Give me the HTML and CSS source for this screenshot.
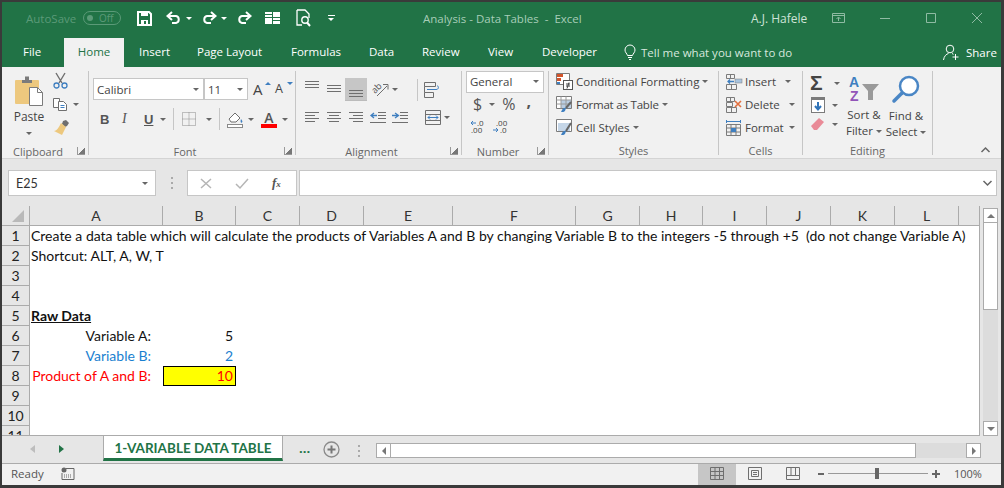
FILE: index.html
```html
<!DOCTYPE html>
<html lang="en">
<head>
    <title>Analysis - Data Tables - Excel</title>
    <meta charset="utf-8">
    <link rel="stylesheet" href="styles.css">
</head>
<body>
<div class="window">

    <!-- title bar -->
    <div class="titlebar">
        <span class="autosave">AutoSave</span>
        <span class="toggle"><i class="knob"></i>Off</span>
        <svg class="qa qa-save" width="15" height="15" viewBox="0 0 15 15"><path d="M1 1h11l2 2v11H1z" fill="none" stroke="#fff" stroke-width="2"/><rect x="4" y="1" width="7" height="4" fill="#fff"/><rect x="4" y="9" width="7" height="5" fill="#fff"/><rect x="7" y="10" width="2" height="3" fill="#217346"/></svg>
        <svg class="qa qa-undo" width="15" height="14" viewBox="0 0 15 14"><path d="M2 5h8a3.6 3.6 0 0 1 0 7H6" fill="none" stroke="#fff" stroke-width="2"/><path d="M6 1 1.500 5 6 9" fill="none" stroke="#fff" stroke-width="2"/></svg>
        <i class="caret caret-white qa-c1"></i>
        <svg class="qa qa-redo" width="15" height="14" viewBox="0 0 15 14"><path d="M13 5H5a3.600 3.600 0 0 0 0 7h4" fill="none" stroke="#fff" stroke-width="2"/><path d="M9 1l4.500 4L9 9" fill="none" stroke="#fff" stroke-width="2"/></svg>
        <i class="caret caret-white qa-c2"></i>
        <svg class="qa qa-repeat" width="15" height="14" viewBox="0 0 15 14"><path d="M13 5H5a3.600 3.600 0 0 0 0 7h4" fill="none" stroke="#fff" stroke-width="2"/><path d="M9 1l4.500 4L9 9" fill="none" stroke="#fff" stroke-width="2"/></svg>
        <svg class="qa qa-layout" width="15" height="12" viewBox="0 0 15 12"><path d="M0 0h7v5H0zM8 0h7v5H8zM0 6h7v6H0zM8 6h7v6H8z" fill="#fff"/><path d="M0 2.500h7M8 8.500h7" stroke="#217346"/></svg>
        <svg class="qa qa-preview" width="15" height="18" viewBox="0 0 15 18"><path d="M1 1h8l4 4v4M1 1v15h5" fill="none" stroke="#fff" stroke-width="1.300"/><circle cx="9" cy="11" r="3.200" fill="none" stroke="#fff" stroke-width="1.400"/><path d="M11 13.500l3 3.500" stroke="#fff" stroke-width="2"/></svg>
        <span class="qa-more"><i class="bar"></i><i class="caret caret-white"></i></span>
        <span class="doc-title">Analysis - Data Tables&nbsp; -&nbsp; Excel</span>
        <span class="user">A.J. Hafele</span>
        <svg class="win win-display" width="13" height="10" viewBox="0 0 13 10"><path d="M.5.500h12v9H.5zM.5 2.500h12M6.500 8V4.500M4.500 6l2-2 2 2" fill="none" stroke="#8fbba3"/></svg>
        <svg class="win win-min" width="10" height="10" viewBox="0 0 10 10"><path d="M0 5.500h10" stroke="#8fbba3"/></svg>
        <svg class="win win-max" width="10" height="10" viewBox="0 0 10 10"><path d="M.5.500h9v9h-9z" fill="none" stroke="#8fbba3"/></svg>
        <svg class="win win-close" width="10" height="10" viewBox="0 0 10 10"><path d="M0 0l10 10M10 0L0 10" stroke="#8fbba3"/></svg>
    </div>

    <!-- ribbon tabs -->
    <div class="tabs">
        <span class="tab tab-file">File</span>
        <span class="tab tab-home">Home</span>
        <span class="tab tab-insert">Insert</span>
        <span class="tab tab-page">Page Layout</span>
        <span class="tab tab-formulas">Formulas</span>
        <span class="tab tab-data">Data</span>
        <span class="tab tab-review">Review</span>
        <span class="tab tab-view">View</span>
        <span class="tab tab-dev">Developer</span>
        <svg class="bulb" width="12" height="15" viewBox="0 0 12 15"><path d="M3.500 10.500C3 8.500 1 7.500 1 5a5 5 0 0 1 10 0c0 2.500-2 3.500-2.500 5.500zM4 12.500h4M5 14.500h2" fill="none" stroke="#fff"/></svg>
        <span class="tellme">Tell me what you want to do</span>
        <svg class="share-icon" width="16" height="17" viewBox="0 0 16 17"><circle cx="7" cy="5" r="3.800" fill="none" stroke="#fff"/><path d="M.5 16c.5-4 3-6 5-6.500M9 9.500c.6.200 1 .5 1.500.8M12.500 10v6M9.500 13h6" fill="none" stroke="#fff"/></svg>
        <span class="share">Share</span>
    </div>

    <!-- ribbon -->
    <div class="ribbon">

        <div class="group g-clipboard">
            <div class="group-body clip-body">
                <div class="paste">
                    <svg width="30" height="31" viewBox="0 0 30 31"><rect x="1" y="5" width="24" height="24" rx="1" fill="#edc87e"/><path d="M8 5h3V1.500h4V5h3v3H8z" fill="#7b7b7b"/><path d="M15.500 12.500h8l5 5v13h-13z" fill="#fff" stroke="#7b7b7b"/><path d="M23.500 12.500v5h5" fill="none" stroke="#7b7b7b"/></svg>
                    <span class="paste-label">Paste</span>
                    <i class="caret paste-caret"></i>
                </div>
                <div class="clip-tools">
                    <svg width="15" height="16" viewBox="0 0 15 16"><path d="M3 0l6 10M12 0L6 10" stroke="#6f6f6f" stroke-width="1.400"/><circle cx="3.500" cy="12.500" r="2.500" fill="none" stroke="#3f7fc0" stroke-width="1.300"/><circle cx="11.500" cy="12.500" r="2.500" fill="none" stroke="#3f7fc0" stroke-width="1.300"/></svg>
                    <span class="tool-line">
                        <svg width="15" height="13" viewBox="0 0 15 13"><path d="M.5.500h6v9h-6z" fill="#fff" stroke="#6f6f6f"/><path d="M5.500 3.500h5l3 3v6h-8z" fill="#fff" stroke="#6f6f6f"/><path d="M7.500 7.500h4M7.500 9.500h4" stroke="#3f7fc0"/></svg>
                        <i class="caret copy-caret"></i>
                    </span>
                    <svg width="17" height="15" viewBox="0 0 17 15"><path d="M10 1l3-1 3 3-2 3-2 1-3-3z" fill="#6f6f6f"/><path d="M8 3l5 4-4 8-8-4c3 0 5-4 7-8z" fill="#edc87e"/></svg>
                </div>
            </div>
            <div class="group-label"><span></span><span>Clipboard</span><i class="launcher"></i></div>
        </div>

        <div class="group g-font">
            <div class="group-body">
                <div class="font-row1">
                    <span class="select font-name">Calibri<i class="caret"></i></span>
                    <span class="select font-size">11<i class="caret"></i></span>
                    <span class="grow-a grow-big">A<i class="tip tip-up"></i></span>
                    <span class="grow-a grow-small">A<i class="tip tip-down"></i></span>
                </div>
                <div class="font-row2">
                    <span class="fmt fmt-b">B</span>
                    <span class="fmt fmt-i">I</span>
                    <span class="fmt fmt-u">U</span>
                    <i class="caret c-u"></i>
                    <i class="vsep s-1"></i>
                    <svg class="ic-border" width="14" height="14" viewBox="0 0 14 14"><path d="M.5.500h13v13H.5zM7 .5v13M.5 7h13" fill="none" stroke="#8a8a8a" stroke-dasharray="1 1"/></svg>
                    <i class="caret c-b"></i>
                    <i class="vsep s-2"></i>
                    <svg class="ic-fill" width="17" height="17" viewBox="0 0 17 17"><path d="M2 8l6-6 5 5-4 4H4z" fill="#fff" stroke="#6f6f6f"/><path d="M14 8c1 1.500 2 2.500 1 3.500s-2-.5-1-3.500z" fill="#3f7fc0"/><rect x=".5" y="13.500" width="15" height="3" fill="#fff" stroke="#8a8a8a"/></svg>
                    <i class="caret c-f"></i>
                    <span class="font-color">A</span>
                    <i class="caret c-c"></i>
                </div>
            </div>
            <div class="group-label"><span></span><span>Font</span><i class="launcher"></i></div>
        </div>

        <div class="group g-align">
            <div class="group-body">
                <div class="align-row1">
                    <span class="al al-top"><svg width="14" height="10" viewBox="0 0 14 10"><path d="M0 .5h14M0 3.500h14M0 6.500h14" stroke="#6f6f6f"/></svg></span>
                    <span class="al al-mid"><svg width="14" height="10" viewBox="0 0 14 10"><path d="M0 2.500h14M0 5.500h14M0 8.500h14" stroke="#6f6f6f"/></svg></span>
                    <span class="al al-on"><svg width="14" height="10" viewBox="0 0 14 10"><path d="M0 3.500h14M0 6.500h14M0 9.500h14" stroke="#6f6f6f"/></svg></span>
                    <svg class="ic-orient" width="17" height="15" viewBox="0 0 17 15"><text x="0" y="9" class="ab" transform="rotate(-45 5 7)">ab</text><path d="M5 14l10-10M11 2.500h5v5" fill="none" stroke="#6f6f6f"/></svg>
                    <i class="caret c-o"></i>
                    <i class="vsep s-3"></i>
                    <svg class="ic-wrap" width="16" height="16" viewBox="0 0 16 16"><path d="M.5.500h11v4H.5zM.5 10.500h9v5h-9zM.5 4.500v6" fill="none" stroke="#6f6f6f"/><path d="M3 7.500h9c3 0 3-3 1-4M3 7.500h4" fill="none" stroke="#3f7fc0"/></svg>
                </div>
                <div class="align-row2">
                    <span class="al"><svg width="14" height="11" viewBox="0 0 14 11"><path d="M0 .5h14M0 3.500h10M0 6.500h14M0 9.500h10" stroke="#6f6f6f"/></svg></span>
                    <span class="al"><svg width="14" height="11" viewBox="0 0 14 11"><path d="M0 .5h14M2 3.500h10M0 6.500h14M2 9.500h10" stroke="#6f6f6f"/></svg></span>
                    <span class="al"><svg width="14" height="11" viewBox="0 0 14 11"><path d="M0 .5h14M4 3.500h10M0 6.500h14M4 9.500h10" stroke="#6f6f6f"/></svg></span>
                    <svg class="ic-indent" width="16" height="11" viewBox="0 0 16 11"><path d="M0 10.500h16M8 .5h8M8 3.500h8M8 6.500h8" stroke="#6f6f6f"/><path d="M1 3.500h6M4 1L1 3.500 4 6" fill="none" stroke="#3f7fc0" stroke-width="1.300"/></svg>
                    <svg class="ic-outdent" width="16" height="11" viewBox="0 0 16 11"><path d="M0 10.500h16M8 .5h8M8 3.500h8M8 6.500h8" stroke="#6f6f6f"/><path d="M0 3.500h6M3 1l3.500 2.500L3 6" fill="none" stroke="#3f7fc0" stroke-width="1.300"/></svg>
                    <svg class="ic-merge" width="16" height="15" viewBox="0 0 16 15"><path d="M.5.500h15v14H.5zM.5 4.500h15M.5 10.500h15" fill="none" stroke="#6f6f6f"/><path d="M3 7.500h10M5 5.500l-2 2 2 2M11 5.500l2 2-2 2" fill="none" stroke="#3f7fc0"/></svg>
                    <i class="caret c-m"></i>
                </div>
            </div>
            <div class="group-label"><span></span><span>Alignment</span><i class="launcher"></i></div>
        </div>

        <div class="group g-number">
            <div class="group-body">
                <span class="select num-format">General<i class="caret"></i></span>
                <div class="num-row2">
                    <span class="sym sym-dollar">$</span>
                    <i class="caret c-d"></i>
                    <span class="sym sym-pct">%</span>
                    <span class="sym sym-comma">,</span>
                </div>
                <div class="num-row3">
                    <svg width="16" height="14" viewBox="0 0 16 14"><path d="M1 3h5M3 1L1 3l2 2" fill="none" stroke="#3f7fc0"/><text x="7" y="6" class="dec">.0</text><text x="1" y="13" class="dec">.00</text></svg>
                    <svg width="16" height="14" viewBox="0 0 16 14"><text x="3" y="6" class="dec">.00</text><path d="M0 10h5M3 8l2 2-2 2" fill="none" stroke="#3f7fc0"/><text x="7" y="13" class="dec">.0</text></svg>
                </div>
            </div>
            <div class="group-label"><span></span><span>Number</span><i class="launcher"></i></div>
        </div>

        <div class="group g-styles">
            <div class="group-body stack">
                <div class="line">
                    <svg width="17" height="17" viewBox="0 0 17 17"><path d="M.5.500h13v11H.5z" fill="#fff" stroke="#7b7b7b"/><rect x="1" y="1" width="6" height="3" fill="#d2552c"/><rect x="1" y="5" width="4" height="3" fill="#d2552c"/><rect x="1" y="9" width="3" height="2" fill="#3f7fc0"/><rect x="7.500" y="7.500" width="9" height="9" fill="#fff" stroke="#555"/><path d="M10 11h4M10 13h4M13 9.500l-2 6" stroke="#444"/></svg>
                    <span>Conditional Formatting</span><i class="caret"></i>
                </div>
                <div class="line">
                    <svg width="17" height="17" viewBox="0 0 17 17"><path d="M.5.500h15v12H.5z" fill="#fff" stroke="#7b7b7b"/><rect x="5" y="4" width="10" height="8" fill="#b9cde2"/><path d="M.5 4h15M5 .5v12M10 .5v12M.5 8h15" stroke="#9a9a9a"/><path d="M15 6l-5 6" stroke="#666" stroke-width="2"/><path d="M6 14c1-2 3-2.500 4-2l-1 3c-1 1-2 1-4 1z" fill="#3f7fc0"/></svg>
                    <span class="tight">Format as Table</span><i class="caret"></i>
                </div>
                <div class="line">
                    <svg width="17" height="17" viewBox="0 0 17 17"><path d="M.5.500h15v12H.5z" fill="#fff" stroke="#7b7b7b"/><rect x="2" y="4" width="12" height="8" fill="#c5d6e8"/><path d="M15 4l-5 8" stroke="#666" stroke-width="2"/><path d="M6 14c1-2 3-2.500 4-2l-1 3c-1 1-2 1-4 1z" fill="#3f7fc0"/></svg>
                    <span>Cell Styles</span><i class="caret"></i>
                </div>
            </div>
            <div class="group-label-plain">Styles</div>
        </div>

        <div class="group g-cells">
            <div class="group-body stack">
                <div class="line">
                    <svg width="16" height="16" viewBox="0 0 16 16"><path d="M.5.500h8v4h-8zM.5 10.500h10v5H.5zM5.500 10.500v5M4.500.5v4" fill="none" stroke="#7b7b7b"/><rect x="9" y="5" width="7" height="4" fill="#a9c4de" stroke="#7b7b7b" stroke-width=".5"/><path d="M2 7.500h6M4 5.500l-2 2 2 2" fill="none" stroke="#3f7fc0" stroke-width="1.300"/></svg>
                    <span class="cell-text t-insert">Insert</span><i class="caret"></i>
                </div>
                <div class="line">
                    <svg width="16" height="16" viewBox="0 0 16 16"><path d="M.5.500h8v4h-8zM.5 10.500h10v5H.5zM5.500 10.500v5M4.500.5v4M.5 5.500h6v4h-6z" fill="none" stroke="#7b7b7b"/><path d="M9 4l6 6M15 4l-6 6" stroke="#e2703f" stroke-width="1.600"/></svg>
                    <span class="cell-text t-delete">Delete</span><i class="caret"></i>
                </div>
                <div class="line">
                    <svg width="16" height="16" viewBox="0 0 16 16"><path d="M.5 4.500h14v11H.5zM.5 8h14M.5 12h14M5 4.500v11M10 4.500v11" fill="none" stroke="#7b7b7b"/><rect x="5" y="8" width="5" height="4" fill="#3f7fc0"/><path d="M.5 1.500h14M.5 0v3M14.500 0v3" stroke="#3f7fc0"/></svg>
                    <span class="cell-text t-format">Format</span><i class="caret"></i>
                </div>
            </div>
            <div class="group-label-plain">Cells</div>
        </div>

        <div class="group g-editing">
            <div class="group-body edit-body">
                <div class="edit-small">
                    <span class="tool-line"><span class="sigma">&Sigma;</span><i class="caret"></i></span>
                    <span class="tool-line">
                        <svg width="14" height="16" viewBox="0 0 14 16"><rect x=".5" y=".5" width="13" height="15" fill="#fff" stroke="#7b7b7b"/><rect x="0" y="0" width="14" height="3" fill="#7b7b7b"/><path d="M7 5v7M4 9l3 3.500L10 9" fill="none" stroke="#2f73b8" stroke-width="2"/></svg>
                        <i class="caret"></i>
                    </span>
                    <span class="tool-line">
                        <svg width="14" height="13" viewBox="0 0 14 13"><path d="M0 8l8-8 5 4-7 8H3z" fill="#e98a97"/></svg>
                        <i class="caret"></i>
                    </span>
                </div>
                <div class="edit-big sort">
                    <svg width="32" height="27" viewBox="0 0 32 27"><text x="1" y="12" class="az az-a">A</text><text x="2" y="26" class="az az-z">Z</text><path d="M14 9h17l-6 7v9h-5v-9z" fill="#9a9a9a"/></svg>
                    <span>Sort &amp;</span>
                    <span>Filter<i class="caret"></i></span>
                </div>
                <div class="edit-big find">
                    <svg width="28" height="28" viewBox="0 0 28 28"><circle cx="17" cy="11" r="9" fill="#fff" stroke="#4a86c5" stroke-width="2.500"/><path d="M10 18l-8 8" stroke="#4a86c5" stroke-width="3.500" stroke-linecap="round"/></svg>
                    <span>Find &amp;</span>
                    <span>Select<i class="caret"></i></span>
                </div>
            </div>
            <div class="group-label-plain">Editing</div>
        </div>

        <svg class="collapse" width="9" height="6" viewBox="0 0 9 6"><path d="M.5 5l4-4 4 4" fill="none" stroke="#666" stroke-width="1.500"/></svg>
    </div>

    <!-- name box and formula bar -->
    <div class="formula-bar">
        <span class="name-box">E25<i class="caret"></i></span>
        <span class="grip"></span>
        <span class="fx-box">
            <svg width="12" height="11" viewBox="0 0 12 11"><path d="M1 1l10 9M11 1L1 10" stroke="#b5b5b5" stroke-width="1.500"/></svg>
            <svg width="14" height="11" viewBox="0 0 14 11"><path d="M1 6l4 4 8-9" fill="none" stroke="#b5b5b5" stroke-width="1.500"/></svg>
            <span class="fx">f<small>x</small></span>
        </span>
        <span class="formula-input"><svg width="9" height="6" viewBox="0 0 9 6"><path d="M.5 1l4 4 4-4" fill="none" stroke="#666" stroke-width="1.500"/></svg></span>
    </div>

    <!-- sheet -->
    <div class="sheet-area">
        <div class="sheet">
            <div class="head corner"><i class="corner-tri"></i></div>
            <div class="head">A</div><div class="head">B</div><div class="head">C</div><div class="head">D</div>
            <div class="head">E</div><div class="head">F</div><div class="head">G</div><div class="head">H</div>
            <div class="head">I</div><div class="head">J</div><div class="head">K</div><div class="head">L</div>
            <div class="head head-last"></div>

            <div class="rowh">1</div><div class="cell cell-wide">Create a data table which will calculate the products of Variables A and B by changing Variable B to the integers -5 through +5&nbsp; (do not change Variable A)</div>
            <div class="rowh">2</div><div class="cell cell-wide">Shortcut: ALT, A, W, T</div>
            <div class="rowh">3</div><div class="cell cell-wide"></div>
            <div class="rowh">4</div><div class="cell cell-wide"></div>
            <div class="rowh">5</div><div class="cell cell-wide cell-title">Raw Data</div>
            <div class="rowh">6</div><div class="cell label">Variable A:</div><div class="cell num">5</div><div class="cell cell-rest"></div>
            <div class="rowh">7</div><div class="cell label blue">Variable B:</div><div class="cell num blue">2</div><div class="cell cell-rest"></div>
            <div class="rowh">8</div><div class="cell label red">Product of A and B:</div><div class="cell num red output">10</div><div class="cell cell-rest"></div>
            <div class="rowh">9</div><div class="cell cell-wide"></div>
            <div class="rowh">10</div><div class="cell cell-wide"></div>
            <div class="rowh">11</div><div class="cell cell-wide"></div>
        </div>
        <div class="vscroll">
            <span class="sbtn"><i class="tri tri-up"></i></span>
            <span class="vthumb"></span>
            <span class="vtrack"></span>
            <span class="sbtn"><i class="tri tri-down"></i></span>
        </div>
    </div>

    <!-- sheet tabs -->
    <div class="tabbar">
        <i class="nav nav-left"></i>
        <i class="nav nav-right"></i>
        <span class="sheet-tab">1-VARIABLE DATA TABLE</span>
        <span class="more-tabs">...</span>
        <svg class="add-sheet" width="17" height="17" viewBox="0 0 17 17"><circle cx="8.500" cy="8.500" r="7.500" fill="none" stroke="#8a8a8a" stroke-width="1.300"/><path d="M4.500 8.500h8M8.500 4.500v8" stroke="#777" stroke-width="2"/></svg>
        <span class="grip grip-tabs"></span>
        <div class="hscroll">
            <span class="hbtn"><i class="htri htri-left"></i></span>
            <span class="hthumb"></span>
            <span class="htrack"></span>
            <span class="hbtn hbtn-right"><i class="htri htri-right"></i></span>
        </div>
    </div>

    <!-- status bar -->
    <div class="statusbar">
        <span class="ready">Ready</span>
        <svg class="macro" width="13" height="13" viewBox="0 0 13 13"><circle cx="3" cy="3" r="2.500" fill="#666"/><path d="M5 1.500h8v11H1V6" fill="none" stroke="#666"/><path d="M3 8h8M3 10h8" stroke="#666" stroke-dasharray="1 1"/></svg>
        <span class="view-btn view-on"><svg width="14" height="13" viewBox="0 0 14 13"><path d="M.5.500h13v12H.5zM.5 4.500h13M.5 8.500h13M5 .5v12M9.500.5v12" fill="none" stroke="#6f6f6f"/></svg></span>
        <span class="view-btn"><svg width="14" height="13" viewBox="0 0 14 13"><path d="M.5.500h13v12H.5zM3.500 3.500h7v6h-7zM5 5.500h4M5 7.500h4" fill="none" stroke="#6f6f6f"/></svg></span>
        <span class="view-btn"><svg width="14" height="13" viewBox="0 0 14 13"><path d="M.5 8.500h13M.5.500v12h13V.5M5 .5v8M9.500.5v8M.5.500h13" fill="none" stroke="#6f6f6f"/></svg></span>
        <i class="zoom-sign zoom-minus"></i>
        <span class="zoom-track"><i class="zoom-thumb"></i></span>
        <i class="zoom-sign zoom-plus"></i>
        <span class="zoom-pct">100%</span>
    </div>
</div>
</body>
</html>
```

FILE: styles.css
```css
* {
    box-sizing: border-box;
}

html,
body {
    margin: 0;
    height: 100%;
    background: #3a3a3a;
}

.window {
    width: 1004px;
    height: 488px;
    border-style: solid;
    border-color: #3a3a3a;
    border-width: 2px 3px 3px 2px;
    display: flex;
    flex-direction: column;
    overflow: hidden;
    font-family: "Open Sans", "Noto Sans", sans-serif;
    font-size: 11.5px;
    color: #444;
    background: #f1f1f1;
}

i {
    display: block;
    font-style: normal;
}

svg {
    display: block;
    flex: none;
    overflow: visible;
}

/* shared bits */
.caret {
    flex: none;
    width: 0;
    height: 0;
    border-left: 3.5px solid transparent;
    border-right: 3.5px solid transparent;
    border-top: 3.5px solid #666;
}

.caret-white {
    border-top-color: #fff;
}

.vsep {
    width: 1px;
    height: 22px;
    background: #c6c6c6;
    flex: none;
}

/* title bar */
.titlebar {
    height: 36px;
    background: #217346;
    display: flex;
    align-items: center;
    flex: none;
    padding-left: 24px;
    padding-bottom: 4px;
}

.autosave {
    width: 57px;
    color: #5b9a78;
    font-size: 11.5px;
}

.toggle {
    width: 38px;
    height: 14px;
    border: 1px solid #5b9a78;
    border-radius: 7px;
    color: #5b9a78;
    font-size: 10px;
    display: flex;
    align-items: center;
    padding-left: 3px;
    gap: 6px;
}

.knob {
    width: 6px;
    height: 6px;
    border-radius: 50%;
    background: #5b9a78;
}

.qa-save { margin-left: 16px; }
.qa-undo { margin-left: 14px; }
.qa-c1 { margin-left: 5px; }
.qa-redo { margin-left: 10px; }
.qa-c2 { margin-left: 4px; }
.qa-repeat { margin-left: 10px; }
.qa-layout { margin-left: 13px; }
.qa-preview { margin-left: 16px; }

.qa-more {
    margin-left: 17px;
    width: 7px;
    display: flex;
    flex-direction: column;
    gap: 2px;
}

.bar {
    height: 1px;
    background: #fff;
}

.doc-title {
    margin-left: 88px;
    width: 328px;
    color: #a7cdb8;
    font-size: 11.5px;
}

.user {
    width: 81px;
    color: #cfe3d8;
    font-size: 12px;
}

.win-min { margin-left: 35px; }
.win-max { margin-left: 36px; }
.win-close { margin-left: 36px; }

/* ribbon tabs */
.tabs {
    height: 29px;
    background: #217346;
    color: #fff;
    display: flex;
    align-items: center;
    flex: none;
    font-size: 11.5px;
}

.tab {
    height: 29px;
    line-height: 28px;
    white-space: nowrap;
}

.tab-file { margin-left: 21px; width: 41px; }

.tab-home {
    width: 60px;
    background: #f1f1f1;
    color: #217346;
    text-align: center;
}

.tab-insert { margin-left: 15px; width: 58px; }
.tab-page { width: 94px; }
.tab-formulas { width: 78px; }
.tab-data { width: 53px; }
.tab-review { width: 66px; }
.tab-view { width: 54px; }
.tab-dev { width: 82px; }

.bulb { margin-right: 5px; }

.tellme {
    width: 302px;
    color: #d7e8de;
    white-space: nowrap;
}

.share { margin-left: 7px; font-size: 11.5px; }

/* ribbon */
.ribbon {
    height: 92px;
    flex: none;
    display: flex;
    align-items: flex-start;
    padding-top: 4px;
    border-bottom: 1px solid #d4d4d4;
    position: relative;
}

.group {
    height: 84px;
    border-right: 1px solid #c6c6c6;
    display: flex;
    flex-direction: column;
    flex: none;
}

.g-clipboard { width: 87px; }
.g-font { width: 207px; }
.g-align { width: 166px; }
.g-number { width: 87px; }
.g-styles { width: 170px; }
.g-cells { width: 84px; }
.g-editing { width: 130px; }

.group-body {
    height: 72px;
    flex: none;
}

.group-label,
.group-label-plain {
    height: 16px;
    line-height: 15px;
    margin-bottom: -4px;
    color: #666;
    flex: none;
    font-size: 11px;
}

.group-label {
    display: grid;
    grid-template-columns: 1fr auto 1fr;
    align-items: center;
    padding-right: 14px;
}

.group-label-plain {
    text-align: center;
}

.launcher {
    justify-self: end;
    width: 8px;
    height: 8px;
    margin-right: -11px;
    border-left: 1px solid #999;
    border-bottom: 1px solid #999;
    background: linear-gradient(135deg, transparent 55%, #777 55%);
}

.select {
    display: flex;
    align-items: center;
    justify-content: space-between;
    background: #fff;
    border: 1px solid #c6c6c6;
    padding: 0 4px 0 3px;
    flex: none;
}

/* clipboard */
.clip-body {
    display: flex;
    padding-left: 10px;
    padding-top: 4px;
}

.paste {
    width: 34px;
    display: flex;
    flex-direction: column;
    align-items: center;
    flex: none;
}

.paste-label {
    margin-top: 3px;
    font-size: 12px;
    line-height: 16px;
}

.paste-caret {
    margin-top: 7px;
}

.clip-tools {
    margin-left: 7px;
    margin-top: -2px;
    display: flex;
    flex-direction: column;
    gap: 9px;
}

.tool-line {
    display: flex;
    align-items: center;
    gap: 5px;
}

/* font */
.font-row1 {
    display: flex;
    align-items: center;
    padding: 7px 0 0 4px;
    height: 29px;
}

.font-name { width: 111px; height: 22px; }
.font-size { width: 44px; height: 22px; }

.grow-a {
    position: relative;
    font-size: 15px;
    line-height: 20px;
    margin-left: 5px;
    width: 18px;
}

.grow-small {
    font-size: 12.5px;
    margin-left: 4px;
}

.tip {
    position: absolute;
    top: 3px;
    right: 0;
    width: 0;
    height: 0;
    border-left: 3px solid transparent;
    border-right: 3px solid transparent;
}

.tip-up { border-bottom: 3px solid #3f7fc0; }
.tip-down { border-top: 3px solid #3f7fc0; }

.font-row2 {
    display: flex;
    align-items: center;
    height: 22px;
    margin-top: 8px;
    padding-left: 10px;
}

.fmt {
    width: 22px;
    padding-left: 1px;
    font-size: 13px;
    font-family: "Liberation Sans", sans-serif;
    color: #555;
}

.fmt-b { font-weight: bold; }
.fmt-i { font-style: italic; font-family: "Liberation Serif", serif; font-size: 14px; }
.fmt-u { text-decoration: underline; font-weight: bold; width: 17px; }

.c-u { margin-left: 0; }
.s-1 { margin-left: 7px; }
.ic-border { margin-left: 8px; }
.c-b { margin-left: 10px; }
.s-2 { margin-left: 7px; }
.ic-fill { margin-left: 7px; }
.c-f { margin-left: 4px; }

.font-color {
    margin-left: 7px;
    width: 16px;
    height: 18px;
    text-align: center;
    font-size: 14px;
    line-height: 15px;
    font-weight: 600;
    color: #555;
    border-bottom: 4px solid #f00;
}

.c-c { margin-left: 5px; }

/* alignment */
.align-row1,
.align-row2 {
    display: flex;
    align-items: center;
    padding-left: 5px;
}

.align-row1 {
    height: 23px;
    margin-top: 7px;
}

.align-row2 {
    height: 22px;
    margin-top: 5px;
}

.al {
    width: 22px;
    height: 23px;
    display: flex;
    align-items: center;
    justify-content: center;
    flex: none;
}

.al-top,
.al-mid,
.al-on {
    align-items: flex-start;
}

.al-top { padding-top: 3px; }
.al-mid { padding-top: 5px; }

.al-on {
    padding-top: 9px;
    background: #c6c6c6;
    border-bottom: 1px solid #bbb;
}

.ab {
    font-size: 9px;
    fill: #555;
}

.ic-orient { margin-left: 5px; }
.c-o { margin-left: 3px; }
.s-3 { margin-left: 19px; }
.ic-wrap { margin-left: 6px; }
.ic-indent { margin-left: 3px; }
.ic-outdent { margin-left: 6px; }
.ic-merge { margin-left: 17px; }
.c-m { margin-left: 3px; }

/* number */
.num-format {
    width: 78px;
    height: 22px;
    margin: 0 0 0 4px;
    padding-bottom: 1px;
}

.num-row2 {
    display: flex;
    align-items: center;
    height: 22px;
    padding-left: 11px;
}

.sym {
    font-size: 16px;
    line-height: 22px;
    color: #555;
}

.c-d { margin-left: 7px; }
.sym-pct { margin-left: 7px; }
.sym-comma { margin-left: 11px; font-weight: bold; margin-top: -6px; }

.num-row3 {
    display: flex;
    gap: 7px;
    padding: 5px 0 0 8px;
}

.dec {
    font-size: 8px;
    fill: #444;
}

/* styles and cells */
.stack {
    display: flex;
    flex-direction: column;
    gap: 6px;
    padding: 2px 0 0 7px;
}

.line {
    display: flex;
    align-items: center;
    height: 17px;
    gap: 3px;
    white-space: nowrap;
}

.tight {
    letter-spacing: -.2px;
}

.t-insert { width: 37px; }
.t-delete { width: 41px; }
.t-format { width: 41px; }

/* editing */
.edit-body {
    display: flex;
}

.edit-small {
    width: 41px;
    padding: 3px 0 0 7px;
    display: flex;
    flex-direction: column;
    gap: 5px;
    flex: none;
}

.sigma {
    width: 17px;
    font-family: "Liberation Sans", sans-serif;
    font-size: 21px;
    font-weight: bold;
    line-height: 18px;
    color: #444;
}

.edit-small .tool-line svg {
    margin-left: 1px;
}

.edit-small .tool-line .caret {
    margin-left: 2px;
}

.edit-big {
    display: flex;
    flex-direction: column;
    align-items: center;
    line-height: 16px;
    white-space: nowrap;
    width: 40px;
    flex: none;
}

.edit-big span {
    display: flex;
    align-items: center;
    gap: 3px;
}

.edit-big svg {
    margin: 4px 0 5px;
}

.find {
    margin-left: 2px;
}

.az {
    font-size: 14px;
    font-family: "Liberation Sans", sans-serif;
    font-weight: bold;
}

.az-a { fill: #3f7fc0; }
.az-z { fill: #9254b8; }

.collapse {
    position: absolute;
    right: 11px;
    bottom: 5px;
}

/* formula bar */
.formula-bar {
    height: 47px;
    background: #e6e6e6;
    flex: none;
    display: flex;
    padding: 11px 5px 0 6px;
    align-items: flex-start;
}

.name-box,
.fx-box,
.formula-input {
    height: 26px;
    background: #fff;
    border: 1px solid #c6c6c6;
    display: flex;
    align-items: center;
    flex: none;
}

.name-box {
    width: 148px;
    justify-content: space-between;
    padding: 0 7px;
    font-family: Lato, sans-serif;
    font-size: 12.5px;
    color: #333;
}

.grip {
    width: 2px;
    height: 12px;
    margin: 7px 14px 0 15px;
    flex: none;
    background: repeating-linear-gradient(#aaa 0 2px, transparent 2px 5px);
}

.fx-box {
    width: 110px;
    padding-left: 12px;
    gap: 23px;
}

.fx {
    font-family: "Liberation Serif", serif;
    font-style: italic;
    font-weight: bold;
    font-size: 13px;
    color: #555;
}

.fx small {
    font-size: 9px;
}

.formula-input {
    width: 698px;
    margin-left: 2px;
    justify-content: flex-end;
    padding-right: 4px;
}

/* sheet */
.sheet-area {
    height: 230px;
    flex: none;
    display: flex;
    background: #e6e6e6;
}

.sheet {
    width: 978px;
    height: 230px;
    overflow: hidden;
    flex: none;
    display: grid;
    grid-template-columns: 28px 133px 73px 64px 64px 89px 123px 64px 63px 64px 64px 64px 64px 21px;
    grid-auto-rows: 20px;
    grid-template-rows: 20px;
    font-family: Lato, sans-serif;
    font-size: 14px;
    background: #fff;
    border-right: 1px solid #ababab;
    border-bottom: 1px solid #ababab;
}

.head {
    background: #e6e6e6;
    border-right: 1px solid #ababab;
    border-bottom: 1px solid #ababab;
    text-align: center;
    line-height: 19px;
    color: #333;
}

.corner-tri {
    width: 0;
    height: 0;
    margin: 4px 0 0 10px;
    border-left: 12px solid transparent;
    border-bottom: 12px solid #b9b9b9;
}

.head-last {
    border-right: 0;
}

.rowh {
    background: #e6e6e6;
    border-right: 1px solid #ababab;
    border-bottom: 1px solid #ababab;
    text-align: center;
    line-height: 19px;
    color: #222;
}

.cell {
    line-height: 20px;
    color: #111;
    white-space: nowrap;
    padding: 0 3px 0 1px;
}

.cell-wide {
    grid-column: 2 / -1;
}

.cell-rest {
    grid-column: 4 / -1;
}

.cell-title {
    font-weight: bold;
    text-decoration: underline;
}

.label {
    text-align: right;
    padding-right: 12px;
}

.num {
    text-align: right;
}

.blue { color: #1a7fd0; }
.red { color: #f00; }

.output {
    background: #ff0;
    border: 1px solid #000;
    line-height: 18px;
    padding-right: 2px;
}

.vscroll {
    margin: 2px 0 0 3px;
    width: 15px;
    height: 228px;
    display: flex;
    flex-direction: column;
    background: #dcdcdc;
}

.sbtn {
    height: 15px;
    flex: none;
    background: #fff;
    border: 1px solid #ababab;
    display: flex;
    align-items: center;
    justify-content: center;
}

.tri {
    width: 0;
    height: 0;
    border-left: 4px solid transparent;
    border-right: 4px solid transparent;
}

.tri-up { border-bottom: 4px solid #777; }
.tri-down { border-top: 4px solid #777; }

.vthumb {
    height: 87px;
    flex: none;
    background: #fff;
    border: 1px solid #ababab;
    border-top: 0;
}

.vtrack {
    flex: 1;
}

/* sheet tabs */
.tabbar {
    height: 28px;
    flex: none;
    background: #e6e6e6;
    display: flex;
    align-items: flex-start;
    border-bottom: 1px solid #ababab;
}

.nav {
    width: 0;
    height: 0;
    margin-top: 9px;
    border-top: 4px solid transparent;
    border-bottom: 4px solid transparent;
}

.nav-left {
    margin-left: 28px;
    border-right: 5px solid #bdbdbd;
}

.nav-right {
    margin-left: 24px;
    border-left: 5px solid #217346;
}

.sheet-tab {
    margin-left: 39px;
    width: 180px;
    height: 25px;
    background: #fff;
    border-bottom: 3px solid #217346;
    border-left: 1px solid #ababab;
    border-right: 1px solid #ababab;
    color: #217346;
    font-family: Lato, sans-serif;
    font-weight: bold;
    font-size: 13.5px;
    line-height: 24px;
    text-align: center;
    white-space: nowrap;
}

.more-tabs {
    margin-left: 16px;
    width: 20px;
    color: #217346;
    font-weight: bold;
    font-size: 13px;
    line-height: 25px;
}

.add-sheet {
    margin: 5px 0 0 4px;
}

.grip-tabs {
    margin: 9px 16px 0 18px;
}

.hscroll {
    margin-top: 7px;
    width: 605px;
    height: 15px;
    display: flex;
    background: #dcdcdc;
}

.hbtn {
    width: 15px;
    height: 15px;
    flex: none;
    background: #fff;
    border: 1px solid #ababab;
    display: flex;
    align-items: center;
    justify-content: center;
}

.hbtn-right {
    margin-left: 2px;
}

.htri {
    width: 0;
    height: 0;
    border-top: 4px solid transparent;
    border-bottom: 4px solid transparent;
}

.htri-left { border-right: 4px solid #777; }
.htri-right { border-left: 4px solid #777; }

.hthumb {
    width: 525px;
    flex: none;
    background: #fff;
    border: 1px solid #ababab;
    border-left: 0;
}

.htrack {
    flex: 1;
}

/* status bar */
.statusbar {
    flex: 1;
    display: flex;
    align-items: center;
    background: #f1f1f1;
    color: #555;
    padding-bottom: 3px;
}

.ready {
    margin-left: 9px;
    width: 50px;
}

.macro {
    width: 13px;
}

.view-btn {
    width: 38px;
    height: 22px;
    margin-bottom: -3px;
    padding-bottom: 3px;
    display: flex;
    align-items: center;
    justify-content: center;
    flex: none;
}

.view-on {
    margin-left: 624px;
    background: #c6c6c6;
}

.zoom-sign {
    width: 6px;
    height: 2px;
    background: #666;
    position: relative;
    flex: none;
}

.zoom-minus {
    margin-left: 6px;
}

.zoom-plus {
    width: 8px;
    margin-left: 4px;
}

.zoom-plus::after {
    content: "";
    position: absolute;
    left: 3px;
    top: -3px;
    width: 2px;
    height: 8px;
    background: #666;
}

.zoom-track {
    margin-left: 4px;
    width: 100px;
    height: 1px;
    background: #999;
    position: relative;
    flex: none;
}

.zoom-thumb {
    position: absolute;
    left: 47px;
    top: -5px;
    width: 4px;
    height: 11px;
    background: #666;
}

.zoom-pct {
    margin-left: 14px;
    font-size: 11px;
}
```
